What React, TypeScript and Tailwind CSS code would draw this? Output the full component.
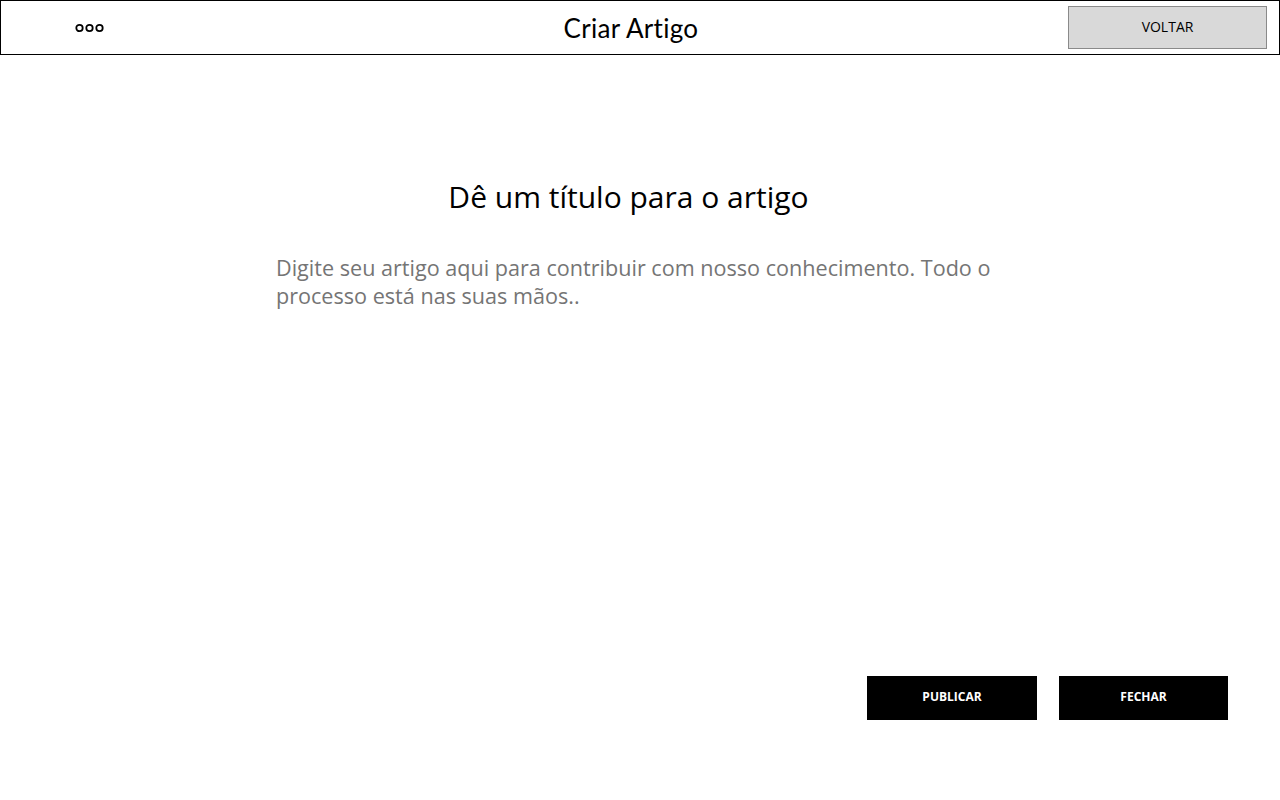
import React from 'react';

const Dots: React.FC = () => (
  <svg width="30" height="10" viewBox="0 0 30 10" fill="none" stroke="black" strokeWidth="1.8">
    <circle cx="4.5" cy="5" r="3.2" />
    <circle cx="14.5" cy="5" r="3.2" />
    <circle cx="24.5" cy="5" r="3.2" />
  </svg>
);

const App: React.FC = () => {
  return (
    <div className="min-h-screen w-[1280px] h-[800px] bg-white flex flex-col font-['Open_Sans',sans-serif] text-black">
      <header className="h-[55px] border border-black grid grid-cols-[1fr_auto_1fr] items-center pl-[74px] pr-[12px]">
        <div className="flex items-center">
          <Dots />
        </div>
        <h1 className="text-[26px] font-['Lato',sans-serif] tracking-[0.3px] pt-[1px] mr-[80px]">Criar Artigo</h1>
        <div className="flex justify-end">
          <button className="w-[199px] h-[43px] bg-[#d9d9d9] border border-[#8a8a8a] text-[14px] pb-[3px]">
            VOLTAR
          </button>
        </div>
      </header>

      <main className="flex flex-col items-center pt-[122px]">
        <h2 className="text-[30px] leading-[40px] mr-[23px]">Dê um título para o artigo</h2>
        <p className="mt-[37px] w-[728px] text-[21.6px] leading-[28px] text-[#757575]">
          Digite seu artigo aqui para contribuir com nosso conhecimento. Todo o processo está nas suas mãos..
        </p>
      </main>

      <div className="flex justify-end gap-[22px] pr-[52px] mt-[366px]">
        <button className="w-[170px] h-[44px] bg-black text-white text-[12px] font-bold pb-[2px]">PUBLICAR</button>
        <button className="w-[169px] h-[44px] bg-black text-white text-[12px] font-bold pb-[2px]">FECHAR</button>
      </div>
    </div>
  );
};

export default App;
